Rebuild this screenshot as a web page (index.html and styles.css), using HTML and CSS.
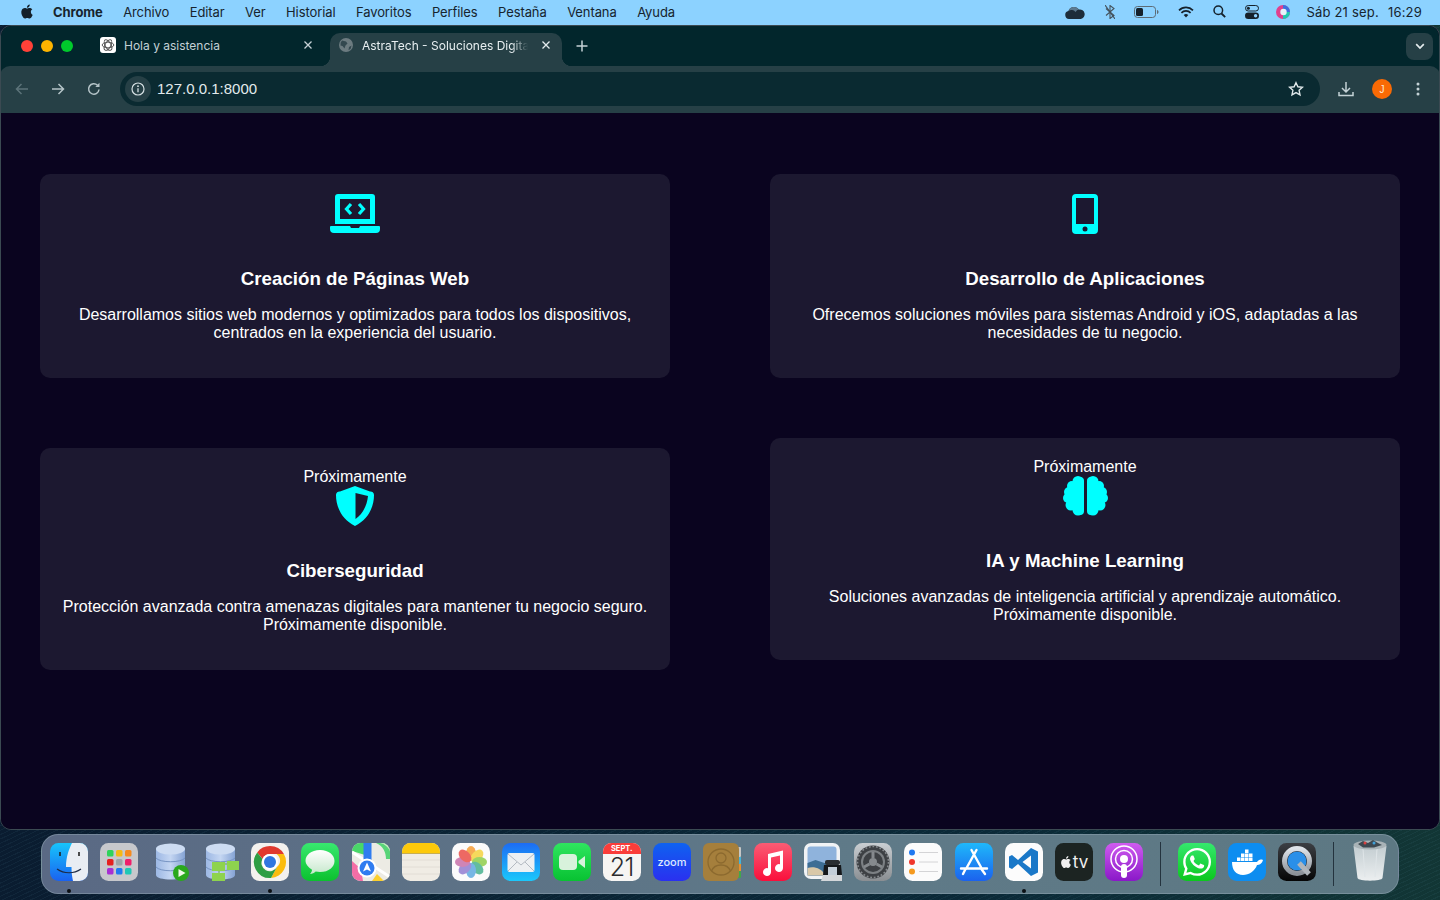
FILE: index.html
```html
<!DOCTYPE html>
<html lang="es">
<head>
<meta charset="utf-8">
<title>AstraTech - Soluciones Digitales</title>
<link rel="stylesheet" href="styles.css">
</head>
<body>
<header class="menubar">
  <nav class="menu-left">
    <svg class="apple" viewBox="0 0 24 24" width="14" height="15"><path fill="#14202a" d="M12.152 6.896c-.948 0-2.415-1.078-3.96-1.04-2.04.027-3.91 1.183-4.961 3.014-2.117 3.675-.546 9.103 1.519 12.09 1.013 1.454 2.208 3.09 3.792 3.039 1.52-.065 2.09-.987 3.935-.987 1.831 0 2.35.987 3.96.948 1.637-.026 2.676-1.48 3.676-2.948 1.156-1.688 1.636-3.325 1.662-3.415-.039-.013-3.182-1.221-3.22-4.857-.026-3.04 2.48-4.494 2.597-4.559-1.429-2.09-3.623-2.324-4.39-2.376-2-.156-3.675 1.09-4.61 1.09zM15.53 3.83c.843-1.012 1.4-2.427 1.245-3.83-1.207.052-2.662.805-3.532 1.818-.78.896-1.454 2.338-1.273 3.714 1.338.104 2.715-.688 3.559-1.701"/></svg>
    <b class="menu-app">Chrome</b>
    <span>Archivo</span><span>Editar</span><span>Ver</span><span>Historial</span><span>Favoritos</span><span>Perfiles</span><span>Pestaña</span><span>Ventana</span><span>Ayuda</span>
  </nav>
  <div class="menu-right">
    <svg width="20" height="14" viewBox="0 0 20 14"><path fill="#1d2d3a" d="M4 14a4 4 0 0 1-.6-7.900A6 6 0 0 1 14 4.600 4.700 4.700 0 0 1 15.800 14z"/><path fill="#5d7a90" d="M3.400 6.100A6 6 0 0 1 14 4.600a5 5 0 0 0-3.500 2.300 5 5 0 0 0-7.100-.8z"/></svg>
    <svg class="st-bt" width="10" height="14" viewBox="0 0 10 14"><path fill="none" stroke="#44525c" stroke-width="1.100" d="M1 3.500l8 7-4 3V.500l4 3-8 7"/><path stroke="#44525c" stroke-width="1.100" d="M0 0l10 14"/></svg>
    <svg class="st-bat" width="25" height="12" viewBox="0 0 25 12"><rect x=".5" y=".5" width="21" height="11" rx="3" fill="none" stroke="#5c6b75"/><rect x="2" y="2" width="7" height="8" rx="1.500" fill="#15212b"/><path d="M23 4v4c1-.3 1.500-1 1.500-2S24 4.300 23 4z" fill="#5c6b75"/></svg>
    <svg class="st-wifi" width="16" height="12" viewBox="0 0 16 12"><g fill="none" stroke="#15212b" stroke-width="1.700"><path d="M1 4.300a10 10 0 0 1 14 0"/><path d="M3.400 6.800a6.500 6.500 0 0 1 9.200 0"/></g><path fill="#15212b" d="M8 11.500L5.700 9a3.300 3.300 0 0 1 4.600 0z"/></svg>
    <svg class="st-search" width="13" height="13" viewBox="0 0 13 13"><circle cx="5.300" cy="5.300" r="4.300" fill="none" stroke="#15212b" stroke-width="1.500"/><path d="M8.500 8.500l3.700 3.700" stroke="#15212b" stroke-width="1.800"/></svg>
    <svg class="st-ctl" width="14" height="14" viewBox="0 0 14 14"><rect x=".5" y=".5" width="13" height="5.500" rx="2.750" fill="none" stroke="#15212b"/><circle cx="3.400" cy="3.200" r="1.500" fill="#15212b"/><rect y="7.500" width="14" height="6.500" rx="3.250" fill="#15212b"/><circle cx="10.600" cy="10.700" r="1.700" fill="#8fd2ff"/></svg>
    <svg class="st-siri" width="14" height="14" viewBox="0 0 14 14"><circle cx="7" cy="7" r="7" fill="#e0408f"/><path d="M7 0a7 7 0 0 1 7 7H7z" fill="#3a6fe0"/><path d="M14 7a7 7 0 0 1-7 7V7z" fill="#20c8b0"/><circle cx="7.500" cy="7" r="3.200" fill="#e8f2fa"/></svg>
    <span class="st-date">Sáb 21 sep.</span><span class="st-time">16:29</span>
  </div>
</header>

<div class="window">
  <div class="tabstrip">
    <div class="traffic"><i class="dot-red"></i><i class="dot-yellow"></i><i class="dot-green"></i></div>
    <div class="tab">
      <svg class="fav" width="16" height="16" viewBox="0 0 16 16"><rect width="16" height="16" rx="3" fill="#fff"/><g fill="none" stroke="#4a4a4a" stroke-width=".9"><ellipse cx="8" cy="8" rx="5.800" ry="2.800"/><ellipse cx="8" cy="8" rx="5.800" ry="2.800" transform="rotate(60 8 8)"/><ellipse cx="8" cy="8" rx="5.800" ry="2.800" transform="rotate(120 8 8)"/></g></svg>
      <span class="tab-title">Hola y asistencia</span>
      <svg class="tab-x" width="10" height="10" viewBox="0 0 10 10"><path d="M1.500 1.500l7 7m0-7l-7 7" stroke="#c6d2d6" stroke-width="1.300"/></svg>
    </div>
    <div class="tab tab-active">
      <svg class="fav" width="16" height="16" viewBox="0 0 16 16"><circle cx="8" cy="8" r="7" fill="#6c7b80"/><path d="M4 3.500l4 1 1.500 2-2 2-1 3-2-2.500-2-.5.200-3zM11 10l2.500-1.500-.8 3.300-2.200 1.500z" fill="#33484f"/></svg>
      <span class="tab-title tab-fade">AstraTech - Soluciones Digitales</span>
      <svg class="tab-x" width="10" height="10" viewBox="0 0 10 10"><path d="M1.500 1.500l7 7m0-7l-7 7" stroke="#e4ecee" stroke-width="1.300"/></svg>
    </div>
    <svg class="newtab" width="12" height="12" viewBox="0 0 12 12"><path d="M6 .5v11M.5 6h11" stroke="#c6d2d6" stroke-width="1.500"/></svg>
    <div class="tab-search"><svg width="10" height="7" viewBox="0 0 10 7"><path d="M1.200 1.200L5 5l3.800-3.800" fill="none" stroke="#e4ecee" stroke-width="1.700"/></svg></div>
  </div>

  <div class="toolbar">
    <svg class="nav-icon" width="16" height="16" viewBox="0 0 16 16"><path d="M14 8H2.500M7.500 3L2.500 8l5 5" fill="none" stroke="#5c7379" stroke-width="1.500"/></svg>
    <svg class="nav-icon" width="16" height="16" viewBox="0 0 16 16"><path d="M2 8h11.500M8.500 3l5 5-5 5" fill="none" stroke="#b5c4c8" stroke-width="1.500"/></svg>
    <svg class="nav-icon" width="16" height="16" viewBox="0 0 16 16"><path d="M13 8.500A5.200 5.200 0 1 1 11.500 4.300" fill="none" stroke="#b5c4c8" stroke-width="1.500"/><path d="M13.500 1.800v4.200H9.300z" fill="#b5c4c8"/></svg>
    <div class="omnibox">
      <span class="info-pill"><svg width="14" height="14" viewBox="0 0 14 14"><circle cx="7" cy="7" r="6" fill="none" stroke="#d6e0e3" stroke-width="1.200"/><path d="M7 6.200v4" stroke="#d6e0e3" stroke-width="1.300"/><circle cx="7" cy="4.200" r=".9" fill="#d6e0e3"/></svg></span>
      <span class="url">127.0.0.1:8000</span>
      <svg class="star" width="16" height="16" viewBox="0 0 16 16"><path d="M8 1.700l1.900 4.100 4.500.5-3.300 3 .9 4.500L8 11.600l-4 2.200.9-4.500-3.300-3 4.500-.5z" fill="none" stroke="#e0e8ea" stroke-width="1.400"/></svg>
    </div>
    <svg class="tool-dl" width="16" height="16" viewBox="0 0 16 16"><path d="M8 1v9.500M4 7l4 4 4-4M1 11v3.500h14V11" fill="none" stroke="#c4d2d6" stroke-width="1.500"/></svg>
    <span class="avatar">J</span>
    <svg class="tool-more" width="4" height="14" viewBox="0 0 4 14"><circle cx="2" cy="2" r="1.500" fill="#c4d2d6"/><circle cx="2" cy="7" r="1.500" fill="#c4d2d6"/><circle cx="2" cy="12" r="1.500" fill="#c4d2d6"/></svg>
  </div>

  <main class="page">
    <section class="services">
      <article class="card">
        <svg class="ico" width="50" height="40" viewBox="0 0 50 40"><path fill="#0ff" fill-rule="evenodd" d="M8 0h34a3 3 0 0 1 3 3v27H5V3a3 3 0 0 1 3-3zM10 5v20h30V5z"/><path fill="#0ff" d="M1 32h19l1 2h8l1-2h19a1 1 0 0 1 1 1v2a4 4 0 0 1-4 4H4a4 4 0 0 1-4-4v-2a1 1 0 0 1 1-1z"/><path d="M21 10l-4.500 5 4.500 5M29 10l4.500 5-4.500 5" fill="none" stroke="#0ff" stroke-width="3.200"/></svg>
        <h3 class="card-title">Creación de Páginas Web</h3>
        <p class="card-text">Desarrollamos sitios web modernos y optimizados para todos los dispositivos, centrados en la experiencia del usuario.</p>
      </article>
      <article class="card">
        <svg class="ico" width="30" height="40" viewBox="0 0 30 40"><path fill="#0ff" fill-rule="evenodd" d="M6 0h18a4 4 0 0 1 4 4v32a4 4 0 0 1-4 4H6a4 4 0 0 1-4-4V4a4 4 0 0 1 4-4zM6 4v26h18V4z"/><circle cx="15" cy="35" r="2.500" fill="#1c1830"/></svg>
        <h3 class="card-title">Desarrollo de Aplicaciones</h3>
        <p class="card-text">Ofrecemos soluciones móviles para sistemas Android y iOS, adaptadas a las necesidades de tu negocio.</p>
      </article>
      <article class="card card-offset">
        <span class="soon">Próximamente</span>
        <svg class="ico" width="40" height="40" viewBox="0 0 40 40"><path fill="#0ff" fill-rule="evenodd" d="M20 0l15 5.500a3.500 3.500 0 0 1 4 3.500c0 11-5 24-19 31C6 33 1 20 1 9a3.500 3.500 0 0 1 4-3.500zM20.500 7v26c7-5 11.500-13 12.500-23z"/></svg>
        <h3 class="card-title">Ciberseguridad</h3>
        <p class="card-text">Protección avanzada contra amenazas digitales para mantener tu negocio seguro. Próximamente disponible.</p>
      </article>
      <article class="card">
        <span class="soon">Próximamente</span>
        <svg class="ico" width="45" height="40" viewBox="0 0 45 40"><g fill="#0ff"><circle cx="15" cy="5.500" r="5.500"/><circle cx="9" cy="10" r="5"/><circle cx="6" cy="16" r="5"/><circle cx="5" cy="22" r="5"/><circle cx="8" cy="29" r="5.500"/><circle cx="15" cy="34" r="5.500"/><rect x="5" y="6" width="16" height="28" rx="3"/><rect x="12" y="1" width="9" height="38" rx="4"/><circle cx="30" cy="5.500" r="5.500"/><circle cx="36" cy="10" r="5"/><circle cx="39" cy="16" r="5"/><circle cx="40" cy="22" r="5"/><circle cx="37" cy="29" r="5.500"/><circle cx="30" cy="34" r="5.500"/><rect x="24" y="6" width="16" height="28" rx="3"/><rect x="24" y="1" width="9" height="38" rx="4"/></g></svg>
        <h3 class="card-title">IA y Machine Learning</h3>
        <p class="card-text">Soluciones avanzadas de inteligencia artificial y aprendizaje automático. Próximamente disponible.</p>
      </article>
    </section>
  </main>
</div>

<footer class="desk">
  <div class="dock">
    <div class="app app-run"><svg viewBox="0 0 38 38"><defs><linearGradient id="f1" x1="0" y1="0" x2="0" y2="1"><stop offset="0" stop-color="#17c4fb"/><stop offset="1" stop-color="#1a62f0"/></linearGradient></defs><rect width="38" height="38" rx="8.500" fill="url(#f1)"/><path d="M22 0h7.500A8.500 8.500 0 0 1 38 8.500v21a8.500 8.500 0 0 1-8.500 8.500H23c-1-4-1.500-9-1.500-14H16C16 14 19 6 22 0z" fill="#e9edf3"/><path d="M10 9v4M29 9v4" stroke="#222" stroke-width="1.600"/><path d="M7 26c7 5 17 5 24 0" fill="none" stroke="#1d2a45" stroke-width="1.200"/></svg></div>
    <div class="app"><svg viewBox="0 0 38 38"><rect width="38" height="38" rx="8.500" fill="#c7c8cc"/><rect x="7" y="7" width="6.500" height="6.500" rx="1.500" fill="#2fd35a"/><rect x="16" y="7" width="6.500" height="6.500" rx="1.500" fill="#f5b915"/><rect x="25" y="7" width="6.500" height="6.500" rx="1.500" fill="#f58a1f"/><rect x="7" y="16" width="6.500" height="6.500" rx="1.500" fill="#e5201f"/><rect x="16" y="16" width="6.500" height="6.500" rx="1.500" fill="#9ea5a8"/><rect x="25" y="16" width="6.500" height="6.500" rx="1.500" fill="#ef1f6b"/><rect x="7" y="25" width="6.500" height="6.500" rx="1.500" fill="#a72fd3"/><rect x="16" y="25" width="6.500" height="6.500" rx="1.500" fill="#1f7af0"/><rect x="25" y="25" width="6.500" height="6.500" rx="1.500" fill="#1fc8b5"/></svg></div>
    <div class="app"><svg viewBox="0 0 38 38"><defs><linearGradient id="d1" x1="0" y1="0" x2="1" y2="0"><stop offset="0" stop-color="#9db8e4"/><stop offset=".5" stop-color="#c4d6f2"/><stop offset="1" stop-color="#85a3d4"/></linearGradient></defs><path d="M5 6c0-6 29-6 29 0v26c0 6-29 6-29 0z" fill="url(#d1)"/><ellipse cx="19.500" cy="6" rx="14.500" ry="5.500" fill="#cddcf2"/><path d="M5 15c4 5 25 5 29 0M5 24c4 5 25 5 29 0" fill="none" stroke="#6f8dbd" stroke-width=".9"/><circle cx="30" cy="30" r="8" fill="#2aa81c"/><path d="M27.500 26v8l7-4z" fill="#f0f8e8"/></svg></div>
    <div class="app"><svg viewBox="0 0 38 38"><defs><linearGradient id="d2" x1="0" y1="0" x2="1" y2="0"><stop offset="0" stop-color="#9db8e4"/><stop offset=".5" stop-color="#c4d6f2"/><stop offset="1" stop-color="#85a3d4"/></linearGradient></defs><path d="M5 6c0-6 29-6 29 0v26c0 6-29 6-29 0z" fill="url(#d2)"/><ellipse cx="19.500" cy="6" rx="14.500" ry="5.500" fill="#cddcf2"/><path d="M5 15c4 5 25 5 29 0M5 24c4 5 25 5 29 0" fill="none" stroke="#6f8dbd" stroke-width=".9"/><path d="M18 25v8M30 21H24" stroke="#6cae3e"/><rect x="11" y="19" width="13" height="9" fill="#8ed34e"/><rect x="26" y="18" width="12" height="9" fill="#8ed34e"/><rect x="11" y="30" width="13" height="8" fill="#8ed34e"/></svg></div>
    <div class="app app-run"><svg viewBox="0 0 38 38"><rect width="38" height="38" rx="8.500" fill="#f3f1ee"/><path d="M19 3a16 16 0 0 1 13.900 8H19a8 8 0 0 0-7.400 5L6.200 9.400A16 16 0 0 1 19 3z" fill="#e0392e"/><path d="M32.900 11A16 16 0 0 1 20 35l6-11a8 8 0 0 0-.5-13z" fill="#fbbc0e"/><path d="M6.200 9.400A16 16 0 0 0 20 35l6-11a8 8 0 0 1-14.500-8z" fill="#2e9e44"/><circle cx="19" cy="19" r="8" fill="#fff"/><circle cx="19" cy="19" r="6" fill="#2f76e0"/></svg></div>
    <div class="app"><svg viewBox="0 0 38 38"><defs><linearGradient id="m1" x1="0" y1="0" x2="0" y2="1"><stop offset="0" stop-color="#38e86f"/><stop offset="1" stop-color="#0bc12e"/></linearGradient><linearGradient id="m2" x1="0" y1="0" x2="0" y2="1"><stop offset="0" stop-color="#fff"/><stop offset="1" stop-color="#c6e8cc"/></linearGradient></defs><rect width="38" height="38" rx="8.500" fill="url(#m1)"/><path d="M19 7c9 0 14.500 5 14.500 11S28 29 19 29c-1.600 0-3-.2-4.300-.5-1.500 1.300-3.400 2.400-5.700 2.500 1.200-1.200 1.900-2.600 2-4.200C7 24 4.500 21.300 4.500 18 4.500 12 10 7 19 7z" fill="url(#m2)"/></svg></div>
    <div class="app"><svg viewBox="0 0 38 38"><clipPath id="mp"><rect width="38" height="38" rx="8.500"/></clipPath><g clip-path="url(#mp)"><rect width="38" height="38" fill="#ecebe4"/><path d="M0 0h13v12L0 8z" fill="#49d769"/><path d="M24 0h14v16h-4c0-7-3-13-10-16z" fill="#58d478"/><path d="M28 0h10v8c-2-4-5-7-10-8z" fill="#cfe8c8"/><path d="M0 18l9 8 2 12H0z" fill="#f46ea6"/><path d="M20 38l5-7 7 7z" fill="#fbcf2e"/><path d="M0 9l38 25" stroke="#fff" stroke-width="3"/><rect x="11.500" y="0" width="8" height="22" fill="#2f7cf0"/><circle cx="15" cy="25" r="9.500" fill="#fff"/><circle cx="15" cy="25" r="7.500" fill="#2f7cf0"/><path d="M15 19.500l4 9-4-2-4 2z" fill="#fff"/></g></svg></div>
    <div class="app"><svg viewBox="0 0 38 38"><clipPath id="nt"><rect width="38" height="38" rx="8.500"/></clipPath><g clip-path="url(#nt)"><rect width="38" height="38" fill="#f0ece4"/><rect width="38" height="10" fill="#fdc90a"/><rect y="10" width="38" height="1" fill="#c8ae50"/><path d="M0 17h38M0 24h38M0 31h38" stroke="#dedad0" stroke-width=".8"/></g></svg></div>
    <div class="app"><svg viewBox="0 0 38 38"><rect width="38" height="38" rx="8.500" fill="#fbfbfb"/><g opacity=".82"><ellipse cx="19" cy="10.500" rx="5" ry="7.500" fill="#f59a2f"/><ellipse cx="19" cy="10.500" rx="5" ry="7.500" fill="#f6d23a" transform="rotate(45 19 19)"/><ellipse cx="19" cy="10.500" rx="5" ry="7.500" fill="#8ccc44" transform="rotate(90 19 19)"/><ellipse cx="19" cy="10.500" rx="5" ry="7.500" fill="#42b08c" transform="rotate(135 19 19)"/><ellipse cx="19" cy="10.500" rx="5" ry="7.500" fill="#5aa8e0" transform="rotate(180 19 19)"/><ellipse cx="19" cy="10.500" rx="5" ry="7.500" fill="#8f79d0" transform="rotate(225 19 19)"/><ellipse cx="19" cy="10.500" rx="5" ry="7.500" fill="#c66ca8" transform="rotate(270 19 19)"/><ellipse cx="19" cy="10.500" rx="5" ry="7.500" fill="#ea4a42" transform="rotate(315 19 19)"/></g></svg></div>
    <div class="app"><svg viewBox="0 0 38 38"><defs><linearGradient id="ma" x1="0" y1="0" x2="0" y2="1"><stop offset="0" stop-color="#1d6cf3"/><stop offset="1" stop-color="#1cc8fb"/></linearGradient></defs><rect width="38" height="38" rx="8.500" fill="url(#ma)"/><rect x="5.500" y="10" width="27" height="19" rx="2" fill="#eef0f2"/><path d="M6 11l13 11 13-11M6 28l9-9M32 28l-9-9" fill="none" stroke="#b4bac2" stroke-width="1"/></svg></div>
    <div class="app"><svg viewBox="0 0 38 38"><defs><linearGradient id="ft" x1="0" y1="0" x2="0" y2="1"><stop offset="0" stop-color="#2fe55f"/><stop offset="1" stop-color="#08c232"/></linearGradient></defs><rect width="38" height="38" rx="8.500" fill="url(#ft)"/><rect x="6" y="11" width="18" height="16" rx="4" fill="#d8f2dc"/><path d="M25.500 18l6.500-5v12l-6.500-5z" fill="#d8f2dc"/></svg></div>
    <div class="app app-cal"><div class="cal-top">SEPT.</div><div class="cal-day">21</div></div>
    <div class="app app-zoom"><span>zoom</span></div>
    <div class="app"><svg viewBox="0 0 38 38"><rect x="34" y="4" width="4" height="10" rx="1" fill="#c7c7c5"/><rect x="34" y="14" width="4" height="7" fill="#45b3d8"/><rect x="34" y="21" width="4" height="7" fill="#e89030"/><rect x="34" y="28" width="4" height="7" rx="1" fill="#41a84a"/><rect width="36" height="38" rx="6" fill="#a57f3c"/><circle cx="18" cy="19" r="13" fill="none" stroke="#8c6a2f" stroke-width="1.300"/><circle cx="18" cy="15" r="5" fill="none" stroke="#8c6a2f" stroke-width="1.300"/><path d="M8.500 28c2-5 5-6 9.500-6s7.500 1 9.500 6" fill="none" stroke="#8c6a2f" stroke-width="1.300"/></svg></div>
    <div class="app"><svg viewBox="0 0 38 38"><defs><linearGradient id="mu" x1="0" y1="0" x2="0" y2="1"><stop offset="0" stop-color="#fb5c74"/><stop offset="1" stop-color="#fa0f3c"/></linearGradient></defs><rect width="38" height="38" rx="8.500" fill="url(#mu)"/><path d="M14 11l15-3.500V25a4 4 0 1 1-3-3.800V12.500l-9 2.100V29a4 4 0 1 1-3-3.800z" fill="#fff"/></svg></div>
    <div class="app"><svg viewBox="0 0 38 38"><rect width="36" height="36" rx="7" fill="#f1f3f5"/><rect x="3.500" y="3.500" width="29" height="29" rx="3" fill="#8fb3dc"/><path d="M3.500 20l8-3 9 3 12-1v13.500h-29z" fill="#3d6d94"/><path d="M3.500 25c6-2 14 0 18 7.500h-18z" fill="#d9c8a8"/><rect x="21" y="17" width="15" height="5" rx="2" fill="#2a2d31"/><path d="M20 22h17l1 10H19z" fill="#16181b"/><rect x="24" y="24" width="9" height="8" fill="#c4ced8"/><path d="M17 38l2-6h19v6z" fill="#d4d7da"/></svg></div>
    <div class="app"><svg viewBox="0 0 38 38"><defs><linearGradient id="se" x1="0" y1="0" x2="0" y2="1"><stop offset="0" stop-color="#c9ced2"/><stop offset="1" stop-color="#8a8e92"/></linearGradient></defs><rect width="38" height="38" rx="8.500" fill="url(#se)"/><circle cx="19" cy="19" r="16.500" fill="#3d4044"/><circle cx="19" cy="19" r="15.500" fill="none" stroke="#85898d" stroke-width="1.600" stroke-dasharray="1.800 1.800"/><circle cx="19" cy="19" r="12" fill="#7c8084"/><circle cx="19" cy="19" r="10" fill="#3d4044"/><circle cx="19" cy="19" r="4" fill="#85898d"/><path d="M19 15V9M15.500 21l-5.500 3M22.500 21l5.500 3" stroke="#85898d" stroke-width="3"/></svg></div>
    <div class="app"><svg viewBox="0 0 38 38"><rect width="38" height="38" rx="8.500" fill="#fbfbfb"/><circle cx="8" cy="9.500" r="3" fill="#1f78f0"/><circle cx="8" cy="19" r="3" fill="#f0372c"/><circle cx="8" cy="28.500" r="3" fill="#f59a1f"/><path d="M15 9.500h19M15 19h19M15 28.500h19" stroke="#d4d4d6" stroke-width="1"/></svg></div>
    <div class="app"><svg viewBox="0 0 38 38"><defs><linearGradient id="as" x1="0" y1="0" x2="0" y2="1"><stop offset="0" stop-color="#1fb8fa"/><stop offset="1" stop-color="#1b62ee"/></linearGradient></defs><rect width="38" height="38" rx="8.500" fill="url(#as)"/><path d="M21.500 7L11 26M16.500 7L27 26M6 25.500h26M30 31l-4-5.500M8 31l2-4" fill="none" stroke="#fff" stroke-width="2.400" stroke-linecap="round"/></svg></div>
    <div class="app app-run"><svg viewBox="0 0 38 38"><rect width="38" height="38" rx="8.500" fill="#fcfcfc"/><path d="M26 5l7 3.500v21L26 33 13 21l-6 5-3-1.500v-11L7 12l6 5zM26 12.500L17.500 19l8.500 6.500z" fill="#1a78c8" fill-rule="evenodd"/></svg></div>
    <div class="app app-tv"><svg width="12" height="14" viewBox="0 0 24 24"><path fill="#f0f0f0" d="M12.152 6.896c-.948 0-2.415-1.078-3.96-1.04-2.04.027-3.91 1.183-4.961 3.014-2.117 3.675-.546 9.103 1.519 12.090 1.013 1.454 2.208 3.090 3.792 3.039 1.520-.065 2.090-.987 3.935-.987 1.831 0 2.350.987 3.960.948 1.637-.026 2.676-1.480 3.676-2.948 1.156-1.688 1.636-3.325 1.662-3.415-.039-.013-3.182-1.221-3.220-4.857-.026-3.040 2.480-4.494 2.597-4.559-1.429-2.090-3.623-2.324-4.390-2.376-2-.156-3.675 1.090-4.610 1.090zM15.530 3.830c.843-1.012 1.400-2.427 1.245-3.830-1.207.052-2.662.805-3.532 1.818-.780.896-1.454 2.338-1.273 3.714 1.338.104 2.715-.688 3.559-1.701"/></svg><span>tv</span></div>
    <div class="app"><svg viewBox="0 0 38 38"><defs><linearGradient id="po" x1="0" y1="0" x2="0" y2="1"><stop offset="0" stop-color="#cf5bf0"/><stop offset="1" stop-color="#8a18c8"/></linearGradient></defs><rect width="38" height="38" rx="8.500" fill="url(#po)"/><circle cx="19" cy="16" r="13" fill="none" stroke="#fff" stroke-width="1.500"/><circle cx="19" cy="16" r="8.500" fill="none" stroke="#fff" stroke-width="1.500"/><circle cx="19" cy="16" r="4" fill="#fff"/><rect x="16" y="21" width="6" height="14" rx="3" fill="#fff"/></svg></div>
    <i class="dock-sep"></i>
    <div class="app"><svg viewBox="0 0 38 38"><defs><linearGradient id="wa" x1="0" y1="0" x2="0" y2="1"><stop offset="0" stop-color="#35e86e"/><stop offset="1" stop-color="#0bc71d"/></linearGradient></defs><rect width="38" height="38" rx="8.500" fill="url(#wa)"/><g transform="translate(5 5) scale(1.170)"><path fill="#fff" d="M17.472 14.382c-.297-.149-1.758-.867-2.030-.967-.273-.099-.471-.148-.670.150-.197.297-.767.966-.940 1.164-.173.199-.347.223-.644.075-.297-.150-1.255-.463-2.390-1.475-.883-.788-1.480-1.761-1.653-2.059-.173-.297-.018-.458.130-.606.134-.133.298-.347.446-.520.149-.174.198-.298.298-.497.099-.198.050-.371-.025-.520-.075-.149-.669-1.612-.916-2.207-.242-.579-.487-.500-.669-.510-.173-.008-.371-.010-.570-.010-.198 0-.520.074-.792.372-.272.297-1.040 1.016-1.040 2.479 0 1.462 1.065 2.875 1.213 3.074.149.198 2.096 3.200 5.077 4.487.709.306 1.262.489 1.694.625.712.227 1.360.195 1.871.118.571-.085 1.758-.719 2.006-1.413.248-.694.248-1.289.173-1.413-.074-.124-.272-.198-.570-.347m-5.421 7.403h-.004a9.870 9.870 0 01-5.031-1.378l-.361-.214-3.741.982.998-3.648-.235-.374a9.860 9.860 0 01-1.510-5.260c.001-5.450 4.436-9.884 9.888-9.884 2.640 0 5.122 1.030 6.988 2.898a9.825 9.825 0 012.893 6.994c-.003 5.450-4.437 9.884-9.885 9.884m8.413-18.297A11.815 11.815 0 0012.050 0C5.495 0 .160 5.335.157 11.892c0 2.096.547 4.142 1.588 5.945L.057 24l6.305-1.654a11.882 11.882 0 005.683 1.448h.005c6.554 0 11.890-5.335 11.893-11.893a11.821 11.821 0 00-3.480-8.413Z"/></g></svg></div>
    <div class="app"><svg viewBox="0 0 38 38"><rect width="38" height="38" rx="8.500" fill="#0d8df0"/><path d="M4 19h25c1.500-2 3-3 6-2-1 4-4 5-6 5-2 6-8 10-14 10-7 0-11-5-11-13z" fill="#fff"/><g fill="#fff"><rect x="9" y="14.500" width="3.500" height="3.500"/><rect x="13" y="14.500" width="3.500" height="3.500"/><rect x="17" y="14.500" width="3.500" height="3.500"/><rect x="21" y="14.500" width="3.500" height="3.500"/><rect x="13" y="10.500" width="3.500" height="3.500"/><rect x="17" y="10.500" width="3.500" height="3.500"/><rect x="21" y="10.500" width="3.500" height="3.500"/><rect x="17" y="6.500" width="3.500" height="3.500"/></g></svg></div>
    <div class="app"><svg viewBox="0 0 38 38"><defs><linearGradient id="qt" x1="0" y1="0" x2="0" y2="1"><stop offset="0" stop-color="#3c3f44"/><stop offset="1" stop-color="#050505"/></linearGradient><linearGradient id="qr" x1="0" y1="0" x2="0" y2="1"><stop offset="0" stop-color="#dfe4ea"/><stop offset="1" stop-color="#8c9198"/></linearGradient></defs><rect width="38" height="38" rx="8.500" fill="url(#qt)"/><circle cx="19" cy="18" r="12.500" fill="none" stroke="url(#qr)" stroke-width="5"/><circle cx="19" cy="18" r="9.500" fill="#2a8fe8"/><path d="M21 20l10 11" stroke="#b0b5ba" stroke-width="5"/></svg></div>
    <i class="dock-sep"></i>
    <div class="app"><svg class="trash" viewBox="0 -5 38 43" width="38" height="43"><defs><linearGradient id="tr" x1="0" y1="0" x2="0" y2="1"><stop offset="0" stop-color="#c3cdd1"/><stop offset="1" stop-color="#eceff0"/></linearGradient></defs><path d="M2.500 3l4 32c.5 3.500 24.500 3.500 25 0l4-32z" fill="url(#tr)"/><path d="M12 6l2 28M26 6l-2 28" stroke="#dfe5e8" stroke-width="1"/><ellipse cx="19" cy="2" rx="16.500" ry="4.500" fill="#a9b3b7"/><path d="M7 1l5-3 5 2 5-3 5 3 4 2-8 2.500H12z" fill="#3d4850"/><circle cx="14" cy="0" r="1.500" fill="#d84040"/><circle cx="23" cy="0" r="1.500" fill="#40a0d8"/></svg></div>
  </div>
</footer>
</body>
</html>
```
FILE: styles.css
```css
* { box-sizing: border-box; }
html, body { margin: 0; height: 100%; }
body {
  width: 1440px;
  height: 900px;
  overflow: hidden;
  display: flex;
  flex-direction: column;
  font-family: "Liberation Sans", Arial, sans-serif;
  background-color: #0a2233;
  background-image:
    repeating-linear-gradient(155deg, rgba(90,150,170,.08) 0 1px, transparent 1px 4px),
    linear-gradient(90deg, #0a1c30, #0b2a38 70%, #123635);
}
.menubar {
  flex: 0 0 25px;
  display: flex;
  justify-content: space-between;
  align-items: center;
  background: #8cd2ff;
  color: #16242e;
  font: 13px Inter, "Liberation Sans", sans-serif;
  padding-bottom: 2px;
}
.menu-left { display: flex; align-items: center; gap: 20.5px; padding-left: 20px; letter-spacing: -.1px; }
.apple { margin-right: -1.5px; }
.menu-app { font-weight: 700; margin-right: 0; }
.menu-right { display: flex; align-items: center; padding-right: 18px; letter-spacing: .2px; }
.st-bt { margin-left: 20px; }
.st-bat { margin-left: 19px; }
.st-wifi { margin-left: 19px; }
.st-search { margin-left: 19px; }
.st-ctl { margin-left: 19px; }
.st-siri { margin-left: 17px; }
.st-date { margin-left: 16px; }
.st-time { margin-left: 9px; }

.window {
  flex: 0 0 805px;
  display: flex;
  flex-direction: column;
  border: 1px solid #3b4a52;
  border-radius: 11px;
  overflow: hidden;
  background: #0a041f;
}
.tabstrip {
  flex: 0 0 40px;
  display: flex;
  align-items: flex-end;
  background: #02262c;
  margin: 0 -1px;
  position: relative;
}
.traffic { width: 92px; height: 33px; padding: 7px 0 0 21px; display: flex; gap: 8px; align-self: flex-end; }
.traffic i { width: 12px; height: 12px; border-radius: 50%; }
.dot-red { background: #ff4138; }
.dot-yellow { background: #fdb400; }
.dot-green { background: #00ca2c; }
.tab {
  width: 238px;
  height: 33px;
  display: flex;
  align-items: center;
  padding: 0 17px 9px 8px;
  color: #c3d1d6;
  font: 12px Inter, "Liberation Sans", sans-serif;
  position: relative;
}
.tab-active {
  width: 232px;
  padding-right: 11px;
  background: #264046;
  color: #e7eef0;
  border-radius: 10px 10px 0 0;
}
.tab-active::before, .tab-active::after {
  content: "";
  position: absolute;
  bottom: 0;
  width: 10px;
  height: 10px;
}
.tab-active::before { left: -10px; background: radial-gradient(circle at 0 0, transparent 10px, #264046 10.5px); }
.tab-active::after { right: -10px; background: radial-gradient(circle at 100% 0, transparent 10px, #264046 10.5px); }
.fav { flex: none; margin-right: 8px; }
.tab-title { flex: 1; white-space: nowrap; overflow: hidden; }
.tab-fade { -webkit-mask-image: linear-gradient(90deg, #000 90%, transparent); mask-image: linear-gradient(90deg, #000 90%, transparent); }
.tab-x { flex: none; margin-left: 13px; }
.newtab { margin: 0 0 14px 14px; }
.tab-search {
  margin: 0 7px 6px auto;
  width: 27px;
  height: 27px;
  border-radius: 8px;
  background: #264046;
  display: flex;
  align-items: center;
  justify-content: center;
}
.toolbar {
  flex: 0 0 47px;
  display: flex;
  align-items: center;
  background: #264046;
  margin: 0 -1px;
  padding: 0 14px 1px 14px;
  border-radius: 10px 10px 0 0;
  box-shadow: 0 -10px 0 #02262c;
}
.nav-icon { margin-right: 20px; }
.omnibox {
  margin-left: -2px;
  width: 1200px;
  height: 34px;
  border-radius: 17px;
  background: #0a2a31;
  display: flex;
  align-items: center;
  padding: 0 16px 0 4px;
}
.info-pill {
  width: 26px;
  height: 26px;
  border-radius: 50%;
  background: #264046;
  display: flex;
  align-items: center;
  justify-content: center;
  margin-left: 1px;
}
.url { margin-left: 6px; font-size: 15px; line-height: 17px; margin-bottom: 1px; color: #e2eaec; }
.star { margin-left: auto; }
.tool-dl { margin-left: 18px; }
.avatar {
  margin-left: 18px;
  width: 20px;
  height: 20px;
  border-radius: 50%;
  background: #f96a05;
  color: #ffe9d8;
  font-size: 10px;
  display: flex;
  align-items: center;
  justify-content: center;
}
.tool-more { margin-left: 24px; }

.page { flex: 1; background: #0a041f; padding: 61px 39px 0; }
.services { display: grid; grid-template-columns: 630px 630px; column-gap: 100px; row-gap: 60px; align-items: start; }
.card {
  display: flex;
  flex-direction: column;
  align-items: center;
  padding: 20px 20px 17px;
  background: #1c1830;
  border-radius: 10px;
  color: #fff;
  text-align: center;
}
.card-offset { margin-top: 10px; }
.soon { font-size: 16px; line-height: 18px; }
.ico { display: block; flex: none; }
.card-title { margin: 33px 0 16px; font-size: 18.72px; line-height: 23px; font-weight: 700; }
.card-text { margin: 0 0 19px; font-size: 16px; line-height: 18px; }

.desk { flex: 1; padding: 4px 41px 0; }
.dock {
  height: 60px;
  display: flex;
  align-items: flex-start;
  gap: 12.25px;
  padding: 8px 0 0 8px;
  border-radius: 17px;
  border: 1px solid rgba(150,170,185,.45);
  background: linear-gradient(90deg, #5a6984, #5f7a88 60%, #5d7883);
}
.app { flex: none; width: 38px; height: 38px; position: relative; }
.app svg { display: block; }
.app svg.trash { margin-top: -5px; }
.app-run::after {
  content: "";
  position: absolute;
  left: 17px;
  top: 46px;
  width: 4px;
  height: 4px;
  border-radius: 50%;
  background: #0b0f14;
}
.app-cal { background: #f6f5f3; border-radius: 8.5px; overflow: hidden; text-align: center; color: #2c2c2e; }
.cal-top { height: 11px; background: #fa3d3a; color: #fff; font: 700 7.5px/11px Inter, "Liberation Sans", sans-serif; }
.cal-day { font: 300 25px/27px Inter, "Liberation Sans", sans-serif; letter-spacing: -.5px; }
.app-zoom { background: linear-gradient(#0f62f0, #2a30f0); border-radius: 8.5px; display: flex; align-items: center; justify-content: center; color: #dfe8ff; font: 500 11px Inter, "Liberation Sans", sans-serif; }
.app-tv { background: #1c2422; border-radius: 8.5px; display: flex; align-items: center; justify-content: center; gap: 1px; color: #f0f0f0; font: 400 17px Inter, "Liberation Sans", sans-serif; }
.app-tv svg { flex: none; }
.dock-sep { flex: none; width: 1px; height: 44px; margin: -1px 4.5px 0; background: #24333e; }
```
